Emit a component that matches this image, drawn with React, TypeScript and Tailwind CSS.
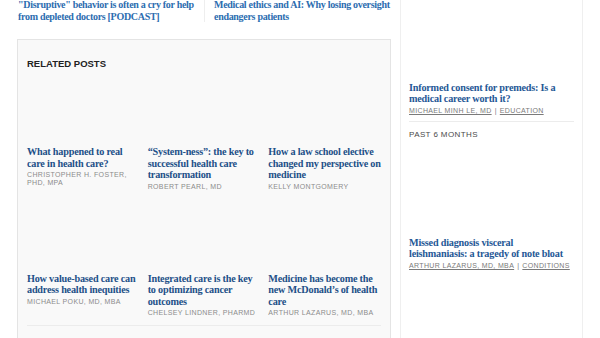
import React from "react";

const serif = "font-['Liberation_Serif',_'DejaVu_Serif',_serif]";
const sans = "font-['Liberation_Sans',_Arial,_sans-serif]";

const related = [
  { title: "What happened to real care in health care?", author: "Christopher H. Foster, PhD, MPA" },
  { title: "“System-ness”: the key to successful health care transformation", author: "Robert Pearl, MD" },
  { title: "How a law school elective changed my perspective on medicine", author: "Kelly Montgomery" },
  { title: "How value-based care can address health inequities", author: "Michael Poku, MD, MBA" },
  { title: "Integrated care is the key to optimizing cancer outcomes", author: "Chelsey Lindner, PharmD" },
  { title: "Medicine has become the new McDonald’s of health care", author: "Arthur Lazarus, MD, MBA" },
];

const RelatedCard = ({ title, author }: { title: string; author: string }) => (
  <div>
    <div className="h-[76px]" />
    <a href="#" className={`${serif} block text-[10.2px] leading-[11.5px] tracking-[-0.02em] font-bold text-[#1d5088]`}>
      {title}
    </a>
    <div className={`${sans} mt-[2px] text-[7px] leading-[8px] tracking-[0.05em] uppercase text-[#8c8c8c]`}>
      {author}
    </div>
  </div>
);

const SideItem = ({ title, author, cat }: { title: string; author: string; cat: string }) => (
  <div>
    <a href="#" className={`${serif} block max-w-[160px] text-[10.2px] leading-[11px] tracking-[-0.02em] font-bold text-[#1f5896]`}>
      {title}
    </a>
    <div className={`${sans} mt-[2px] text-[7px] leading-[9px] tracking-[0.05em] uppercase text-[#7a7a7a] whitespace-nowrap`}>
      <span className="underline">{author}</span>
      <span className="mx-[3px]">|</span>
      <span className="underline">{cat}</span>
    </div>
  </div>
);

export default function App() {
  return (
    <div className="flex w-[600px] h-[338px] overflow-hidden bg-white">
      <main className="w-[400px] shrink-0 pl-[17px] pr-[9px]">
        <div className="grid grid-cols-2 h-[40px] -mt-[1px]">
          <a href="#" className={`${serif} block pl-[1px] pr-[2px] h-[23px] text-[10px] leading-[12px] tracking-[-0.03em] font-bold text-[#2c6db0]`}>
            "Disruptive" behavior is often a cry for help from depleted doctors [PODCAST]
          </a>
          <a href="#" className={`${serif} block pl-[9px] h-[23px] border-l border-[#eeeeee] text-[10px] leading-[12px] tracking-[-0.03em] font-bold text-[#2c6db0]`}>
            Medical ethics and AI: Why losing oversight endangers patients
          </a>
        </div>
        <section className="border border-[#e4e4e4] bg-[#f9f9f9] px-[9px] pt-[18px] h-[320px]">
          <h3 className={`${sans} text-[9.5px] leading-[12px] font-bold text-[#222]`}>RELATED POSTS</h3>
          <div className="grid grid-cols-3 gap-x-[8px] gap-y-[6px]">
            {related.map((r) => (
              <RelatedCard key={r.title} {...r} />
            ))}
          </div>
          <div className="mt-[8px] border-t border-[#ececec]" />
        </section>
      </main>
      <aside className="w-[183px] shrink-0 border-l border-r border-[#efefef] px-[8px]">
        <div className="h-[82px]" />
        <SideItem
          title="Informed consent for premeds: Is a medical career worth it?"
          author="Michael Minh Le, MD"
          cat="Education"
        />
        <div className="mt-[6px] border-t border-[#ececec]" />
        <div className={`${sans} mt-[8px] text-[8px] leading-[10px] tracking-[0.05em] font-medium text-[#4a4a4a]`}>
          PAST 6 MONTHS
        </div>
        <div className="h-[97px]" />
        <SideItem
          title="Missed diagnosis visceral leishmaniasis: a tragedy of note bloat"
          author="Arthur Lazarus, MD, MBA"
          cat="Conditions"
        />
      </aside>
    </div>
  );
}
